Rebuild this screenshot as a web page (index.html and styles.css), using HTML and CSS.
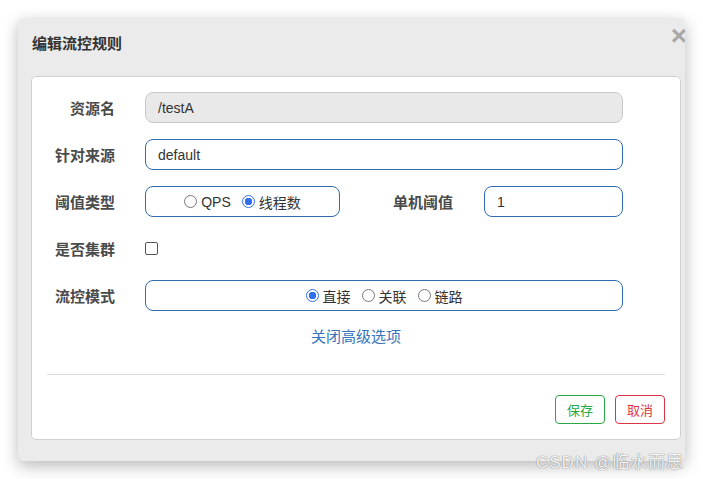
FILE: index.html
```html
<!DOCTYPE html>
<html lang="zh-CN">
<head>
    <meta charset="UTF-8">
    <meta name="viewport" content="width=device-width, initial-scale=1.0">
    <title>编辑流控规则</title>
    <link rel="stylesheet" href="styles.css">
</head>
<body>
    <div class="dialog">
        <span class="close">&times;</span>
        <h1 class="dialog-title">编辑流控规则</h1>
        <div class="card">
            <div class="form">
                <div class="row">
                    <label class="label">资源名</label>
                    <input class="field" type="text" value="/testA" disabled>
                </div>
                <div class="row">
                    <label class="label">针对来源</label>
                    <input class="field" type="text" value="default">
                </div>
                <div class="row">
                    <label class="label">阈值类型</label>
                    <div class="radio-box short">
                        <label class="opt"><input type="radio" name="grade">QPS</label>
                        <label class="opt"><input type="radio" name="grade" checked>线程数</label>
                    </div>
                    <label class="label label-mid">单机阈值</label>
                    <input class="field small" type="text" value="1">
                </div>
                <div class="row">
                    <label class="label">是否集群</label>
                    <input class="check" type="checkbox">
                </div>
                <div class="row">
                    <label class="label">流控模式</label>
                    <div class="radio-box wide">
                        <label class="opt"><input type="radio" name="mode" checked>直接</label>
                        <label class="opt"><input type="radio" name="mode">关联</label>
                        <label class="opt"><input type="radio" name="mode">链路</label>
                    </div>
                </div>
            </div>
            <a class="toggle" href="#">关闭高级选项</a>
            <div class="footer">
                <button class="btn btn-save">保存</button>
                <button class="btn btn-cancel">取消</button>
            </div>
        </div>
    </div>
    <div class="watermark">CSDN @临水而思</div>
</body>
</html>
```

FILE: styles.css
```css
body {
    position: relative;
    margin: 0;
    padding: 18px;
    background-color: #fff;
    font-family: "Liberation Sans", "Noto Sans CJK SC", sans-serif;
    color: #333;
}
.dialog {
    position: relative;
    width: 667px;
    height: 443px;
    box-sizing: border-box;
    padding: 0 4px 0 13px;
    background-color: #ebebeb;
    border-radius: 6px;
    box-shadow: 0 5px 16px rgba(0, 0, 0, 0.28);
    overflow: hidden;
}
.close {
    position: absolute;
    top: 4px;
    right: -2px;
    font-size: 28px;
    font-weight: bold;
    line-height: 28px;
    color: #a8a8a8;
}
.dialog-title {
    margin: 0;
    height: 58px;
    line-height: 52px;
    padding-left: 1px;
    font-size: 15px;
    font-weight: bold;
    color: #333;
}
.card {
    height: 364px;
    box-sizing: border-box;
    background-color: #fff;
    border: 1px solid #d0d0d0;
    border-radius: 5px;
    padding: 15px 15px 15px;
}
.form {
    display: flex;
    flex-direction: column;
    gap: 16px;
}
.row {
    display: flex;
    align-items: center;
    height: 31px;
}
.label {
    width: 68px;
    margin-right: 30px;
    text-align: right;
    font-size: 15px;
    font-weight: bold;
    color: #4a4a4a;
}
.field {
    box-sizing: border-box;
    width: 478px;
    height: 31px;
    padding: 0 12px;
    border: 1px solid #2f6db0;
    border-radius: 8px;
    font-family: inherit;
    font-size: 14px;
    color: #333;
    background-color: #fff;
    outline: none;
}
.field:disabled {
    border-color: #c8c8c8;
    background-color: #e9e9e9;
    color: #333;
}
.field.small {
    width: 139px;
}
.label-mid {
    width: 60px;
    margin-left: 53px;
    margin-right: 31px;
}
.radio-box {
    box-sizing: border-box;
    height: 31px;
    display: flex;
    align-items: center;
    justify-content: center;
    gap: 11px;
    border: 1px solid #2f6db0;
    border-radius: 8px;
    font-size: 14px;
}
.radio-box.short {
    width: 195px;
}
.radio-box.wide {
    width: 478px;
}
.opt {
    display: flex;
    align-items: center;
    color: #333;
}
.opt input {
    appearance: none;
    width: 13px;
    height: 13px;
    margin: 0 4px 0 0;
    border: 1px solid #777;
    border-radius: 50%;
    box-sizing: border-box;
    background-color: #fff;
}
.opt input:checked {
    border: 1px solid #2f6ff0;
    background: radial-gradient(circle, #2f6ff0 0 3.5px, #fff 4px);
}
.check {
    appearance: none;
    width: 13px;
    height: 13px;
    margin: 0;
    border: 1px solid #555;
    border-radius: 2px;
    background-color: #fff;
}
.toggle {
    display: block;
    margin-top: 14px;
    text-align: center;
    font-size: 15px;
    color: #3474bb;
    text-decoration: none;
}
.footer {
    margin-top: 28px;
    border-top: 1px solid #dcdcdc;
    padding-top: 20px;
    display: flex;
    justify-content: flex-end;
    gap: 10px;
}
.btn {
    width: 50px;
    height: 29px;
    font-family: inherit;
    font-size: 13px;
    background-color: #fff;
    border-radius: 4px;
    padding: 0;
}
.btn-save {
    border: 1px solid #28a745;
    color: #28a745;
}
.btn-cancel {
    border: 1px solid #dc3545;
    color: #dc3545;
}
.watermark {
    position: absolute;
    left: 536px;
    top: 448px;
    font-size: 17px;
    color: rgba(255, 255, 255, 0.92);
    text-shadow: 0 0 1px #888, 0 0 1px #888;
    letter-spacing: 1px;
}
```
